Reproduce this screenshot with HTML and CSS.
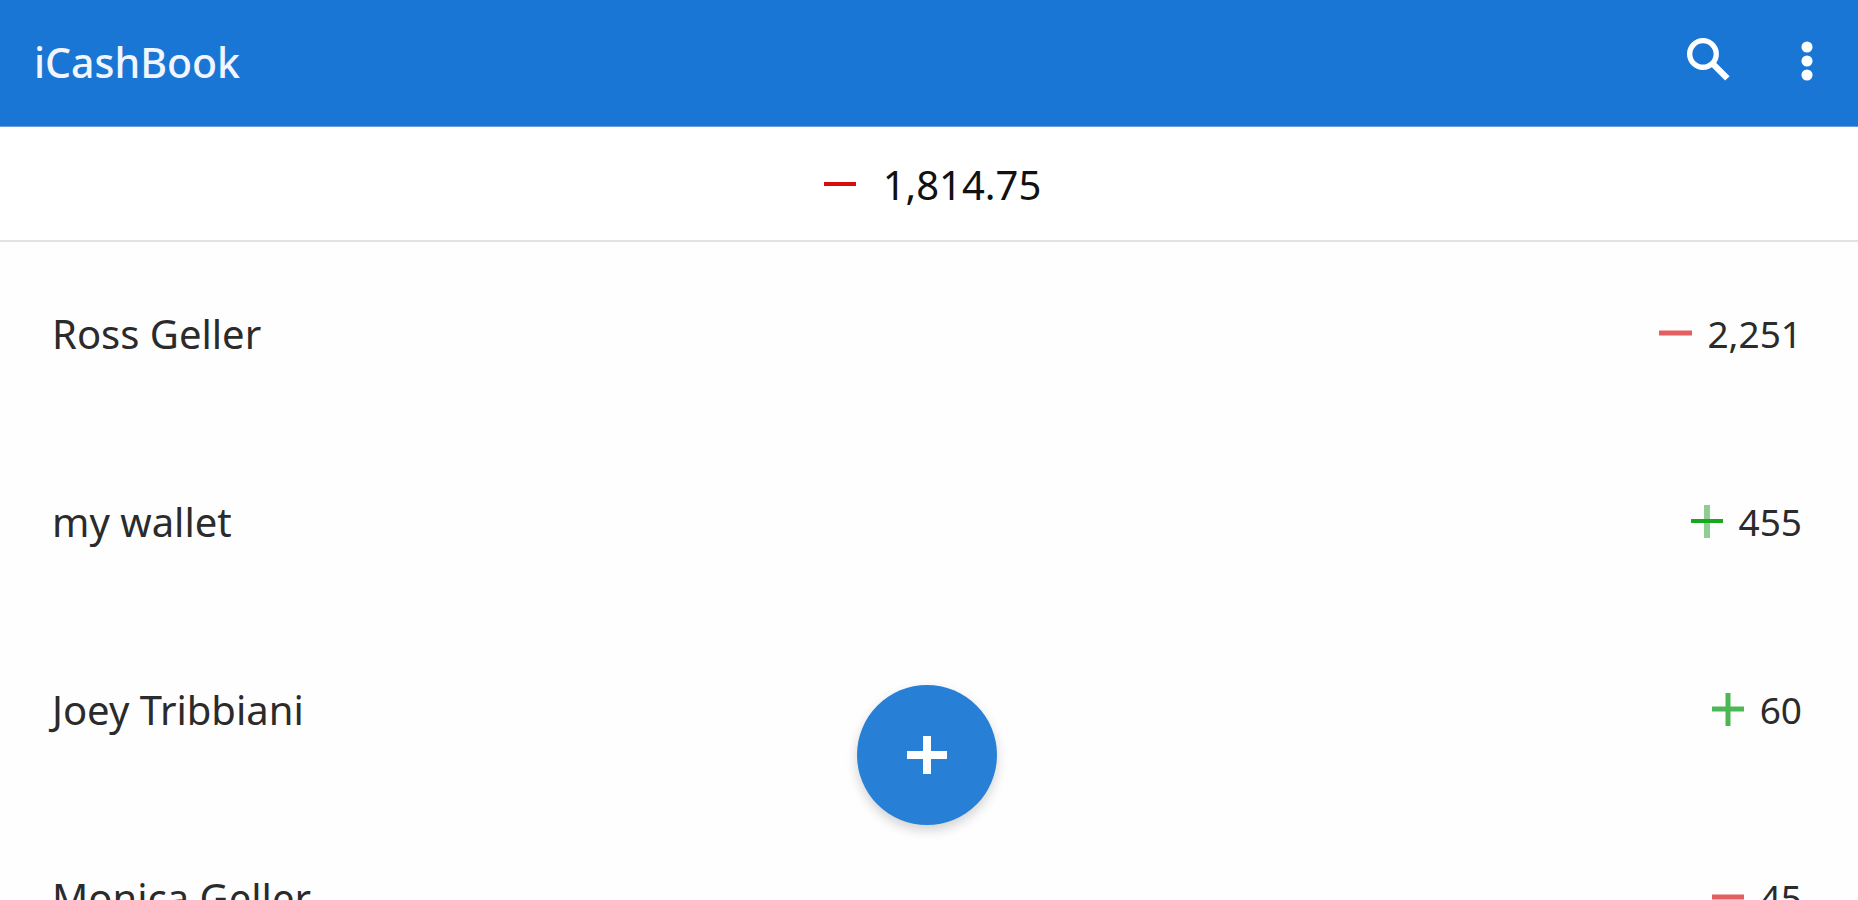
FILE: index.html
```html
<!DOCTYPE html>
<html lang="en">
<head>
<meta charset="utf-8">
<meta name="viewport" content="width=device-width, initial-scale=1">
<title>iCashBook</title>
<link rel="stylesheet" href="styles.css">
</head>
<body>
<header class="app-bar">
  <h1 class="app-title">iCashBook</h1>
  <div class="actions">
    <button class="icon-button" type="button" aria-label="Search">
      <svg viewBox="0 0 24 24" fill="none" stroke="currentColor"><circle cx="9.5" cy="9.5" r="5.5" stroke-width="2.2"/><path d="M13.6 13.6l6 6" stroke-width="2.6"/></svg>
    </button>
    <button class="icon-button" type="button" aria-label="More options">
      <svg viewBox="0 0 24 24" fill="currentColor"><circle cx="12" cy="6.6" r="2.3"/><circle cx="12" cy="12.4" r="2.3"/><circle cx="12" cy="18.2" r="2.3"/></svg>
    </button>
  </div>
</header>
<section class="summary" aria-label="Total balance">
  <svg class="sign minus" viewBox="0 0 34 34" role="img" aria-label="minus"><path d="M1 16h32"/></svg>
  <span class="total">1,814.75</span>
</section>
<main class="content">
  <ul class="accounts">
    <li class="account">
      <span class="name">Ross Geller</span>
      <span class="amount"><svg class="sign minus soft" viewBox="0 0 34 34" role="img" aria-label="minus"><path d="M1 16h33"/></svg>2,251</span>
    </li>
    <li class="account">
      <span class="name">my wallet</span>
      <span class="amount"><svg class="sign plus" viewBox="0 0 34 34" role="img" aria-label="plus"><path class="stem" d="M17 0v33"/><path d="M1 16h32"/></svg>455</span>
    </li>
    <li class="account">
      <span class="name">Joey Tribbiani</span>
      <span class="amount"><svg class="sign plus light" viewBox="0 0 34 34" role="img" aria-label="plus"><path d="M17 0v33M1 16h32"/></svg>60</span>
    </li>
    <li class="account">
      <span class="name">Monica Geller</span>
      <span class="amount"><svg class="sign minus soft" viewBox="0 0 34 34" role="img" aria-label="minus"><path d="M1 16h32"/></svg>45</span>
    </li>
  </ul>
</main>
<button class="add-button" type="button" aria-label="Add account">
  <svg viewBox="0 0 40 40"><path d="M20 1v38M0 20h40"/></svg>
</button>
</body>
</html>
```
FILE: styles.css
```css
* {
  box-sizing: border-box;
}

body {
  display: flex;
  flex-direction: column;
  height: 100vh;
  margin: 0;
  overflow: hidden;
  background: #fefefe;
  color: #2b2b2b;
  font-family: "Noto Sans", "Open Sans", sans-serif;
  font-size: 40px;
  line-height: 56px;
}

button {
  padding: 0;
  border: 0;
  cursor: pointer;
}

.app-bar {
  display: flex;
  flex: none;
  align-items: flex-start;
  justify-content: space-between;
  padding: 31px 22px 33px 34px;
  background: #1976d4;
  border-bottom: 1px solid #6c9bdc;
  color: #fff;
}

.app-title {
  margin: 0;
  color: #f0f5ff;
  font-size: 41px;
  font-weight: 500;
  line-height: 62px;
}

.actions {
  display: flex;
  gap: 40px;
}

.icon-button {
  width: 58px;
  height: 58px;
  background: none;
  color: #fff;
}

.icon-button svg {
  display: block;
  width: 100%;
}

.summary {
  display: flex;
  flex: none;
  align-items: center;
  justify-content: center;
  gap: 26px;
  padding: 30px 0 27px 6px;
  border-bottom: 2px solid #e2e2e2;
  background: #fff;
}

.total {
  color: #111;
}

.sign {
  flex: none;
  width: 34px;
  height: 34px;
  fill: none;
  stroke: currentColor;
  stroke-width: 4;
}

.minus {
  color: #d90d10;
}

.soft {
  color: #e35f60;
  stroke-width: 5;
}

.plus {
  color: #17a81d;
}

.plus .stem {
  stroke: #8fce92;
  stroke-width: 6;
}

.light {
  color: #4cb855;
  stroke-width: 5;
}

.content {
  flex: 1;
  min-height: 0;
  overflow-y: auto;
  scrollbar-width: none;
}

.accounts {
  margin: 0;
  padding: 0;
  list-style: none;
}

.account {
  display: flex;
  align-items: center;
  justify-content: space-between;
  padding: 64px 56px 68px 52px;
}

.amount {
  display: flex;
  align-items: center;
  gap: 15px;
  font-size: 37px;
}

.add-button {
  position: fixed;
  bottom: 75px;
  left: 50%;
  display: flex;
  align-items: center;
  justify-content: center;
  width: 140px;
  height: 140px;
  margin-left: -72px;
  border-radius: 50%;
  background: #2880d6;
  box-shadow: 0 5px 12px rgba(0, 0, 0, 0.18);
}

.add-button svg {
  width: 40px;
  height: 40px;
  fill: none;
  stroke: #fff;
  stroke-width: 8;
}
```
